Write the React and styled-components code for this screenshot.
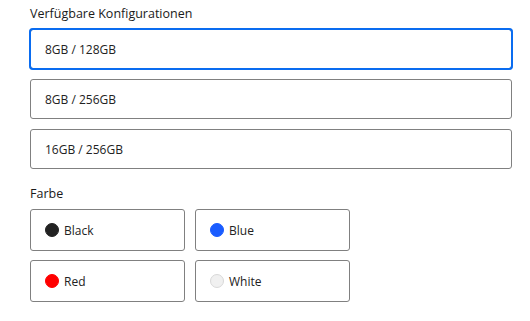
import React from 'react';
import styled, { createGlobalStyle } from 'styled-components';

const GlobalStyle = createGlobalStyle`
  body {
    margin: 0;
    background: #fff;
    font-family: "Open Sans", "Noto Sans", sans-serif;
    color: #222;
  }
`;

const Page = styled.div`
  padding: 6px 19px 0 30px;
  width: 482px;
`;

const Label = styled.div`
  font-size: 12.5px;
  font-weight: 500;
  line-height: 16px;
  color: #1a1a1a;
  margin-bottom: 7px;
`;

const ConfigList = styled.div`
  display: flex;
  flex-direction: column;
  gap: 10px;
  margin-bottom: 17px;
`;

const ConfigButton = styled.button`
  box-sizing: border-box;
  height: 40px;
  width: 100%;
  text-align: left;
  padding: 0 14px;
  background: #fff;
  font-family: inherit;
  font-size: 12px;
  color: #222;
  border: 1px solid #808080;
  border-radius: 3px;
  outline: ${(p) => (p.$active ? '2px solid #0a6cf0' : 'none')};
  outline-offset: -1px;
  box-shadow: ${(p) => (p.$active ? '0 0 0 1px #9cc8ff' : 'none')};
`;

const ColorGrid = styled.div`
  display: grid;
  grid-template-columns: 155px 155px;
  column-gap: 10px;
  row-gap: 9px;
  margin-top: 5px;
`;

const ColorButton = styled.button`
  box-sizing: border-box;
  height: 42px;
  display: flex;
  align-items: center;
  gap: 5px;
  padding: 0 14px;
  background: #fff;
  font-family: inherit;
  font-size: 12px;
  color: #222;
  border: 1px solid #808080;
  border-radius: 3px;
`;

const Dot = styled.span`
  width: 14px;
  height: 14px;
  border-radius: 50%;
  background: ${(p) => p.$color};
  border: 1px solid ${(p) => (p.$color === '#f0f0f0' ? '#d8d8d8' : p.$color)};
  box-sizing: border-box;
  flex-shrink: 0;
`;

const configs = ['8GB / 128GB', '8GB / 256GB', '16GB / 256GB'];
const colors = [
  { name: 'Black', hex: '#222222' },
  { name: 'Blue', hex: '#1a5cff' },
  { name: 'Red', hex: '#ff0000' },
  { name: 'White', hex: '#f0f0f0' },
];

const App = () => {
  return (
    <>
      <GlobalStyle />
      <Page>
        <Label>Verfügbare Konfigurationen</Label>
        <ConfigList>
          {configs.map((c, i) => (
            <ConfigButton key={c} $active={i === 0}>
              {c}
            </ConfigButton>
          ))}
        </ConfigList>
        <Label>Farbe</Label>
        <ColorGrid>
          {colors.map((c) => (
            <ColorButton key={c.name}>
              <Dot $color={c.hex} />
              {c.name}
            </ColorButton>
          ))}
        </ColorGrid>
      </Page>
    </>
  );
};

export default App;
